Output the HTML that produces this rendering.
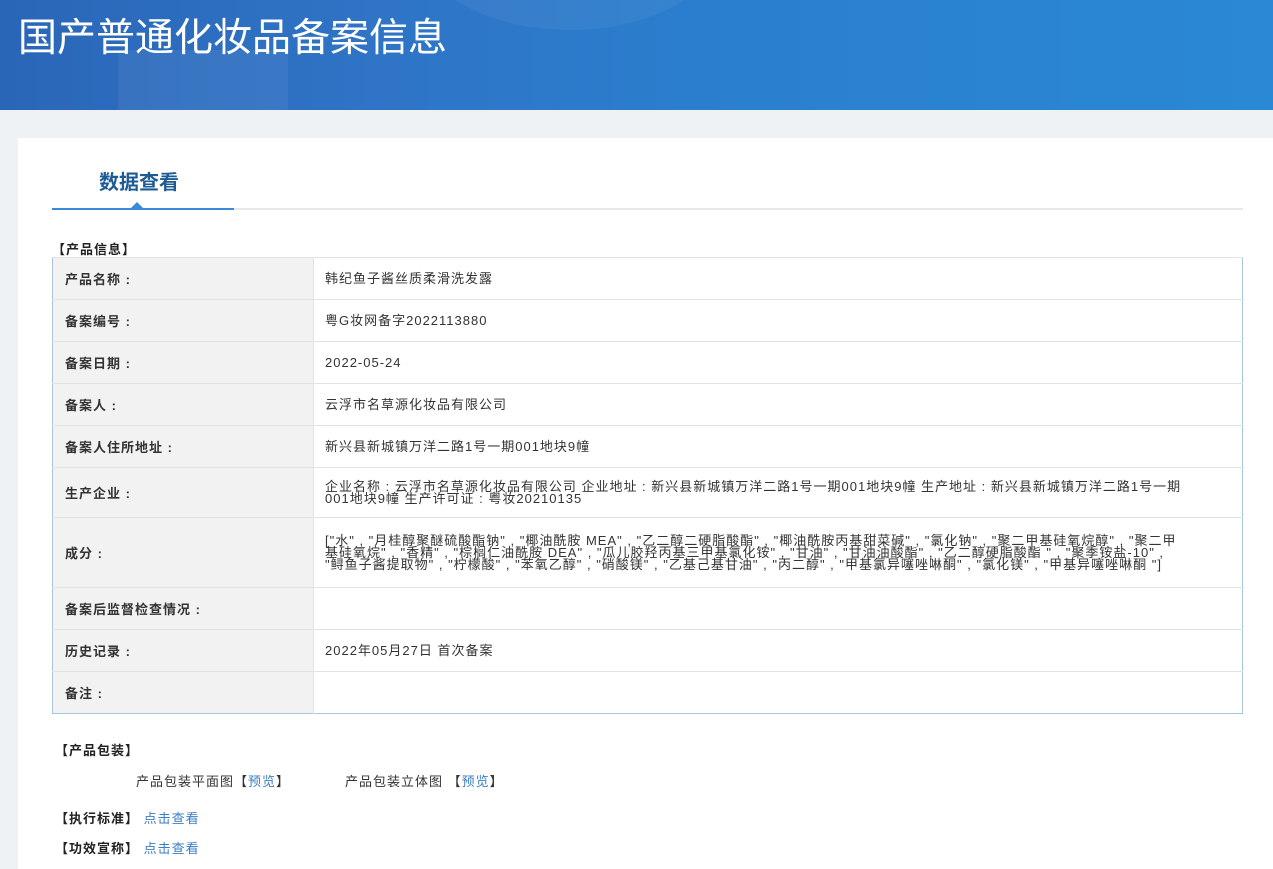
<!DOCTYPE html>
<html><head><meta charset="utf-8"><style>
*{margin:0;padding:0;box-sizing:border-box}
body{width:1273px;height:869px;overflow:hidden;background:#eef2f5;font-family:"Liberation Sans","Noto Sans CJK SC",sans-serif;font-size:13px;color:#333;position:relative;letter-spacing:1px}
.hdr{position:absolute;left:0;top:0;width:1273px;height:110px;background:linear-gradient(90deg,#2a66b8 0%,#2f74c6 30%,#2a80cf 60%,#2a88d4 100%);overflow:hidden}
.hdr .b1{position:absolute;left:118px;top:50px;width:170px;height:60px;background:rgba(255,255,255,0.06)}
.hdr .c1{position:absolute;left:420px;top:-140px;width:300px;height:170px;border-radius:50%;background:rgba(255,255,255,0.05)}
.hdr h1{position:absolute;left:18px;top:7px;font-size:39px;font-weight:normal;color:#fff;letter-spacing:0}
.panel{position:absolute;left:18px;top:138px;width:1255px;height:731px;background:#fff}
.tab{position:absolute;left:99px;top:166px;font-size:20px;font-weight:bold;color:#1d5b94;letter-spacing:0}
.lineg{position:absolute;left:52px;top:208px;width:1191px;height:2px;background:#e6e8ea}
.lineb{position:absolute;left:52px;top:208px;width:182px;height:2px;background:#3a8ad6}
.tri{position:absolute;left:131px;top:202px;width:0;height:0;border-left:6px solid transparent;border-right:6px solid transparent;border-bottom:6px solid #3a8ad6}
.sec{position:absolute;font-weight:bold;color:#222;font-size:13px}
table{position:absolute;left:52px;top:257px;width:1191px;border-collapse:collapse;border:1px solid #a8c4de}
td{border-top:1px solid #e2e2e2;vertical-align:middle;font-size:13px;color:#333}
td.l{width:261px;background:#f2f2f2;font-weight:bold;padding-left:12px;color:#333;border-right:1px solid #e2e2e2}
td.v{padding-left:11px;padding-right:55px;line-height:12px}
a{color:#3a7dc2;text-decoration:none}
.t{position:absolute;font-size:13px;color:#333}
</style></head><body>
<div class="hdr"><div class="b1"></div><div class="c1"></div><h1>国产普通化妆品备案信息</h1></div>
<div class="panel"></div>
<div class="tab">数据查看</div>
<div class="lineg"></div><div class="lineb"></div><div class="tri"></div>
<div class="sec" style="left:52px;top:239px">【产品信息】</div>
<table>
<tr style="height:42px"><td class="l">产品名称 :</td><td class="v">韩纪鱼子酱丝质柔滑洗发露</td></tr>
<tr style="height:42px"><td class="l">备案编号 :</td><td class="v">粤G妆网备字2022113880</td></tr>
<tr style="height:42px"><td class="l">备案日期 :</td><td class="v">2022-05-24</td></tr>
<tr style="height:42px"><td class="l">备案人 :</td><td class="v">云浮市名草源化妆品有限公司</td></tr>
<tr style="height:42px"><td class="l">备案人住所地址 :</td><td class="v">新兴县新城镇万洋二路1号一期001地块9幢</td></tr>
<tr style="height:50px"><td class="l">生产企业 :</td><td class="v">企业名称 : 云浮市名草源化妆品有限公司 企业地址 : 新兴县新城镇万洋二路1号一期001地块9幢 生产地址 : 新兴县新城镇万洋二路1号一期001地块9幢 生产许可证 : 粤妆20210135</td></tr>
<tr style="height:70px"><td class="l">成分 :</td><td class="v">["水" , "月桂醇聚醚硫酸酯钠" , "椰油酰胺 MEA" , "乙二醇二硬脂酸酯" , "椰油酰胺丙基甜菜碱" , "氯化钠" , "聚二甲基硅氧烷醇" , "聚二甲基硅氧烷" , "香精" , "棕榈仁油酰胺 DEA" , "瓜儿胶羟丙基三甲基氯化铵" , "甘油" , "甘油油酸酯" , "乙二醇硬脂酸酯 " , "聚季铵盐-10" , "鲟鱼子酱提取物" , "柠檬酸" , "苯氧乙醇" , "硝酸镁" , "乙基己基甘油" , "丙二醇" , "甲基氯异噻唑啉酮" , "氯化镁" , "甲基异噻唑啉酮 "]</td></tr>
<tr style="height:42px"><td class="l">备案后监督检查情况 :</td><td class="v"></td></tr>
<tr style="height:42px"><td class="l">历史记录 :</td><td class="v">2022年05月27日 首次备案</td></tr>
<tr style="height:42px"><td class="l">备注 :</td><td class="v"></td></tr>
</table>
<div class="sec" style="left:55px;top:740px">【产品包装】</div>
<div class="t" style="left:136px;top:771px">产品包装平面图【<a>预览</a>】</div>
<div class="t" style="left:345px;top:771px">产品包装立体图 【<a>预览</a>】</div>
<div class="sec" style="left:55px;top:808px">【执行标准】 <a style="font-weight:normal">点击查看</a></div>
<div class="sec" style="left:55px;top:838px">【功效宣称】 <a style="font-weight:normal">点击查看</a></div>
</body></html>
